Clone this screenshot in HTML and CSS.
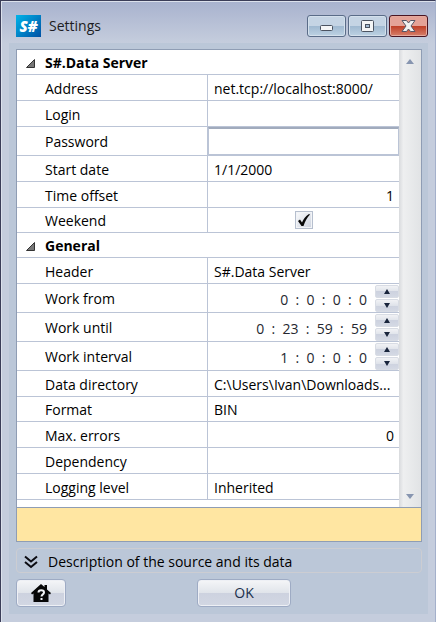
FILE: index.html
```html
<!DOCTYPE html>
<html lang="en">
<head>
<meta charset="utf-8">
<meta name="viewport" content="width=device-width, initial-scale=1">
<title>Settings</title>
<link rel="stylesheet" href="styles.css">
</head>
<body>
<main class="window">
  <header class="titlebar">
    <span class="logo" aria-hidden="true">S#</span>
    <h1 class="title">Settings</h1>
    <div class="window-controls">
      <button class="control" type="button" aria-label="Minimize">
        <svg width="15" height="14" viewBox="0 0 15 14"><rect x="1.5" y="6.5" width="12" height="5" rx="1" fill="#f4f5f6" stroke="#4b5361"/></svg>
      </button>
      <button class="control" type="button" aria-label="Maximize">
        <svg width="15" height="14" viewBox="0 0 15 14"><rect x="1.5" y="1.5" width="12" height="11" rx="1" fill="#f4f5f6" stroke="#4b5361"/><rect x="5.5" y="5.5" width="4" height="3" fill="#a5bdd4" stroke="#4b5361"/></svg>
      </button>
      <button class="control control-close" type="button" aria-label="Close">
        <svg width="15" height="14" viewBox="0 0 15 14"><path d="M1 1.500h4.500l2 2.500 2-2.500H14L10 7l4 5.500H9.500l-2-2.500-2 2.500H1L5 7z" fill="#f1f1f1" stroke="#575767" stroke-linejoin="round"/></svg>
      </button>
    </div>
  </header>

  <form class="content">
    <section class="panel">
      <div class="grid-area">
        <table class="properties">
          <colgroup><col class="name-column"><col></colgroup>
          <tbody>
            <tr class="group"><th colspan="2"><button class="toggle" type="button"><svg width="9" height="9" viewBox="0 0 9 9"><path d="M8.500.5v8h-8z" fill="#777" stroke="#333"/></svg>S#.Data Server</button></th></tr>
            <tr><th><label for="address">Address</label></th><td><input id="address" type="text" value="net.tcp://localhost:8000/"></td></tr>
            <tr><th><label for="login">Login</label></th><td><input id="login" type="text"></td></tr>
            <tr class="tall"><th><label for="password">Password</label></th><td class="flush"><input class="boxed" id="password" type="password"></td></tr>
            <tr><th><label for="start">Start date</label></th><td><input id="start" type="text" value="1/1/2000"></td></tr>
            <tr><th><label for="offset">Time offset</label></th><td><input class="number" id="offset" type="text" value="1"></td></tr>
            <tr class="compact"><th><label for="weekend">Weekend</label></th><td class="check-cell"><span class="check"><input id="weekend" type="checkbox" checked><svg width="14" height="14" viewBox="0 0 14 14"><path d="M1 8l2-1.500 2 3C6.500 6 8.500 3 12 1l1 .5C10 4.500 8 8.500 6.500 13H4.500z" fill="#080808"/></svg></span></td></tr>
          </tbody>
          <tbody>
            <tr class="group"><th colspan="2"><button class="toggle" type="button"><svg width="9" height="9" viewBox="0 0 9 9"><path d="M8.500.5v8h-8z" fill="#777" stroke="#333"/></svg>General</button></th></tr>
            <tr><th><label for="header">Header</label></th><td><input id="header" type="text" value="S#.Data Server"></td></tr>
            <tr class="tall"><th><label for="from">Work from</label></th><td class="flush"><div class="spinner"><input id="from" type="text" value="0  :  0  :  0  :  0"><div class="steps"><button type="button" aria-label="Increase work from"><svg width="6" height="5" viewBox="0 0 6 5"><path d="M3 0l3 5H0z"/></svg></button><button type="button" aria-label="Decrease work from"><svg width="6" height="5" viewBox="0 0 6 5"><path d="M3 5L0 0h6z"/></svg></button></div></div></td></tr>
            <tr class="tall"><th><label for="until">Work until</label></th><td class="flush"><div class="spinner"><input id="until" type="text" value="0  :  23  :  59  :  59"><div class="steps"><button type="button" aria-label="Increase work until"><svg width="6" height="5" viewBox="0 0 6 5"><path d="M3 0l3 5H0z"/></svg></button><button type="button" aria-label="Decrease work until"><svg width="6" height="5" viewBox="0 0 6 5"><path d="M3 5L0 0h6z"/></svg></button></div></div></td></tr>
            <tr class="tall"><th><label for="interval">Work interval</label></th><td class="flush"><div class="spinner"><input id="interval" type="text" value="1  :  0  :  0  :  0"><div class="steps"><button type="button" aria-label="Increase work interval"><svg width="6" height="5" viewBox="0 0 6 5"><path d="M3 0l3 5H0z"/></svg></button><button type="button" aria-label="Decrease work interval"><svg width="6" height="5" viewBox="0 0 6 5"><path d="M3 5L0 0h6z"/></svg></button></div></div></td></tr>
            <tr><th><label for="directory">Data directory</label></th><td><input id="directory" type="text" value="C:\Users\Ivan\Downloads..."></td></tr>
            <tr class="compact"><th><label for="format">Format</label></th><td><select id="format"><option>BIN</option></select></td></tr>
            <tr><th><label for="errors">Max. errors</label></th><td><input class="number" id="errors" type="text" value="0"></td></tr>
            <tr><th><label for="dependency">Dependency</label></th><td><input id="dependency" type="text"></td></tr>
            <tr><th><label for="logging">Logging level</label></th><td><select id="logging"><option>Inherited</option></select></td></tr>
          </tbody>
        </table>
        <div class="scrollbar">
          <button type="button" aria-label="Scroll up"><svg width="8" height="5" viewBox="0 0 8 5"><path d="M4 0l4 5H0z"/></svg></button>
          <button type="button" aria-label="Scroll down"><svg width="8" height="5" viewBox="0 0 8 5"><path d="M4 5L0 0h8z"/></svg></button>
        </div>
      </div>
      <div class="hint"></div>
    </section>

    <button class="description" type="button">
      <svg width="14" height="14" viewBox="0 0 14 14"><path d="M1 1.500l6 5 6-5M1 7l6 5 6-5" fill="none" stroke="#0b0b12" stroke-width="2"/></svg>
      Description of the source and its data
    </button>

    <footer class="actions">
      <button class="button" type="button" aria-label="Help"><svg width="20" height="18" viewBox="0 0 20 18"><path d="M10 0l3.500 3V1H16v4.500L20 9l-1 1.500-1.500-1V18h-15V9.500l-1.500 1L0 9z" fill="#070707"/><path d="M7.500 8.500c0-3 5.500-3 5.500 0 0 2-2.500 1.700-2.500 4M10.500 14v2" fill="none" stroke="#f3f4f7" stroke-width="2"/></svg></button>
      <button class="button button-ok" type="button">OK</button>
    </footer>
  </form>
</main>
</body>
</html>
```
FILE: styles.css
```css
* { box-sizing: border-box; }

body {
  margin: 0;
  background: #c5cddd;
  color: #000;
  font: 14px/20px "Open Sans", "Noto Sans", sans-serif;
}

button, input, select {
  margin: 0;
  padding: 0;
  border: 0;
  border-radius: 0;
  background: none;
  color: inherit;
  font: inherit;
}

svg { display: block; flex: none; }

.window {
  display: flex;
  flex-direction: column;
  min-height: 100vh;
  padding: 0 7px 8px 8px;
  border: 1px solid #3b3d58;
  border-right-color: #a4b0cb;
  border-bottom-color: #7f8ca8;
  box-shadow: inset 1px 1px #dce1ec;
  background: linear-gradient(#a8b2ce, #c5cddd 42px);
}

.titlebar {
  display: flex;
  align-items: center;
  height: 42px;
  padding: 7px 0 0 7px;
}

.logo {
  width: 25px;
  height: 22px;
  margin-right: 8px;
  background: linear-gradient(135deg, #00b4e9, #0050a4);
  color: #fff;
  font: italic 800 15px/22px "Open Sans", sans-serif;
  text-align: center;
}

.title {
  flex: 1;
  margin: 0;
  color: #1c1c22;
  font-size: 14px;
  font-weight: 400;
}

.window-controls { display: flex; gap: 2px; }

.control {
  display: flex;
  align-items: center;
  justify-content: center;
  width: 39px;
  height: 22px;
  border: 1px solid #5a6c88;
  border-radius: 3px;
  box-shadow: inset 0 0 0 1px #d4e0ec;
  background: linear-gradient(#c5d4e4 50%, #9fb8d0 50%, #bdd2e3);
}

.control-close {
  border-color: #4a1522;
  box-shadow: inset 0 0 0 1px #e5a99d;
  background: linear-gradient(#e4a297 50%, #be3d25 50%, #d6806b);
}

.content {
  display: flex;
  flex: 1;
  flex-direction: column;
  padding: 6px 6px 7px 7px;
  background: #bbc7d8;
}

.panel { border: 1px solid #8f9db4; }

.grid-area { display: flex; background: #fff; }

.properties {
  flex: 1;
  min-width: 0;
  margin-bottom: 7px;
  border-spacing: 0;
  table-layout: fixed;
}

.name-column { width: 50%; }

.properties tr { height: 26px; }
.properties .compact, .properties .group { height: 25px; }
.properties .tall { height: 29px; }

.properties th, .properties td {
  padding: 2px 0 0;
  border-bottom: 1px solid #bbc4d6;
}

.properties td.flush { padding: 0; }

.properties th {
  padding-left: 28px;
  border-right: 1px solid #bbc4d6;
  font-weight: 400;
  text-align: left;
}

.properties .group th {
  padding-left: 9px;
  border-right: 0;
}

.toggle {
  display: flex;
  align-items: center;
  gap: 10px;
  font-weight: 700;
}

.properties input[type="text"], .properties input[type="password"], select {
  display: block;
  width: 100%;
  height: 20px;
  padding: 0 5px 0 6px;
  appearance: none;
}

.properties input.boxed {
  height: 28px;
  border: 1px solid #bbc4d6;
  border-top: 2px solid #a1abbd;
}

.properties input.number { text-align: right; }

.check-cell { text-align: center; }

.check {
  display: inline-grid;
  place-items: center;
  vertical-align: top;
}

.check > * { grid-area: 1 / 1; }

.check input {
  width: 18px;
  height: 18px;
  border: 1px solid #b6bfce;
  background: linear-gradient(135deg, #fafbfc, #cdd3df);
  box-shadow: inset 0 0 0 1px #f2f4f7;
  appearance: none;
}

.check svg { pointer-events: none; }

.spinner { display: flex; align-items: center; }

.properties .spinner input {
  flex: 1;
  min-width: 0;
  height: 22px;
  padding: 2px 8px 0 0;
  color: #25272f;
  text-align: right;
}

.steps {
  display: grid;
  gap: 1px;
  width: 24px;
  fill: #19253c;
}

.steps button {
  display: grid;
  place-items: center;
  height: 13px;
  border: 1px solid #d8dce4;
  border-radius: 2px;
  background: linear-gradient(#f1f2f5, #dfe3ea 50%, #cdd2df 50%, #d4d9e4);
}

.scrollbar {
  display: flex;
  flex-direction: column;
  justify-content: space-between;
  width: 22px;
  background: linear-gradient(90deg, #d8dadd, #eeeff0 20%, #e1e3e5);
  fill: #8795b0;
}

.scrollbar button {
  display: grid;
  place-items: center;
  height: 22px;
}

.hint {
  height: 34px;
  border-top: 1px solid #8f9db4;
  background: #ffe6a2;
}

.description {
  display: flex;
  align-items: center;
  gap: 10px;
  height: 25px;
  margin-top: 6px;
  padding: 2px 7px 0;
  border: 1px solid #cccdd2;
  border-radius: 4px;
  text-align: left;
}

.actions {
  display: flex;
  margin-top: 6px;
}

.button {
  display: grid;
  place-items: center;
  width: 50px;
  height: 28px;
  border: 1px solid #9eabc4;
  border-radius: 4px;
  box-shadow: inset 0 0 0 1px #eef0f5;
  background: linear-gradient(#f5f6f8, #e0e4ea 50%, #cdd2df 50%, #d2d7e3);
  color: #20304c;
}

.button-ok {
  width: 94px;
  margin: 0 auto;
}
```
